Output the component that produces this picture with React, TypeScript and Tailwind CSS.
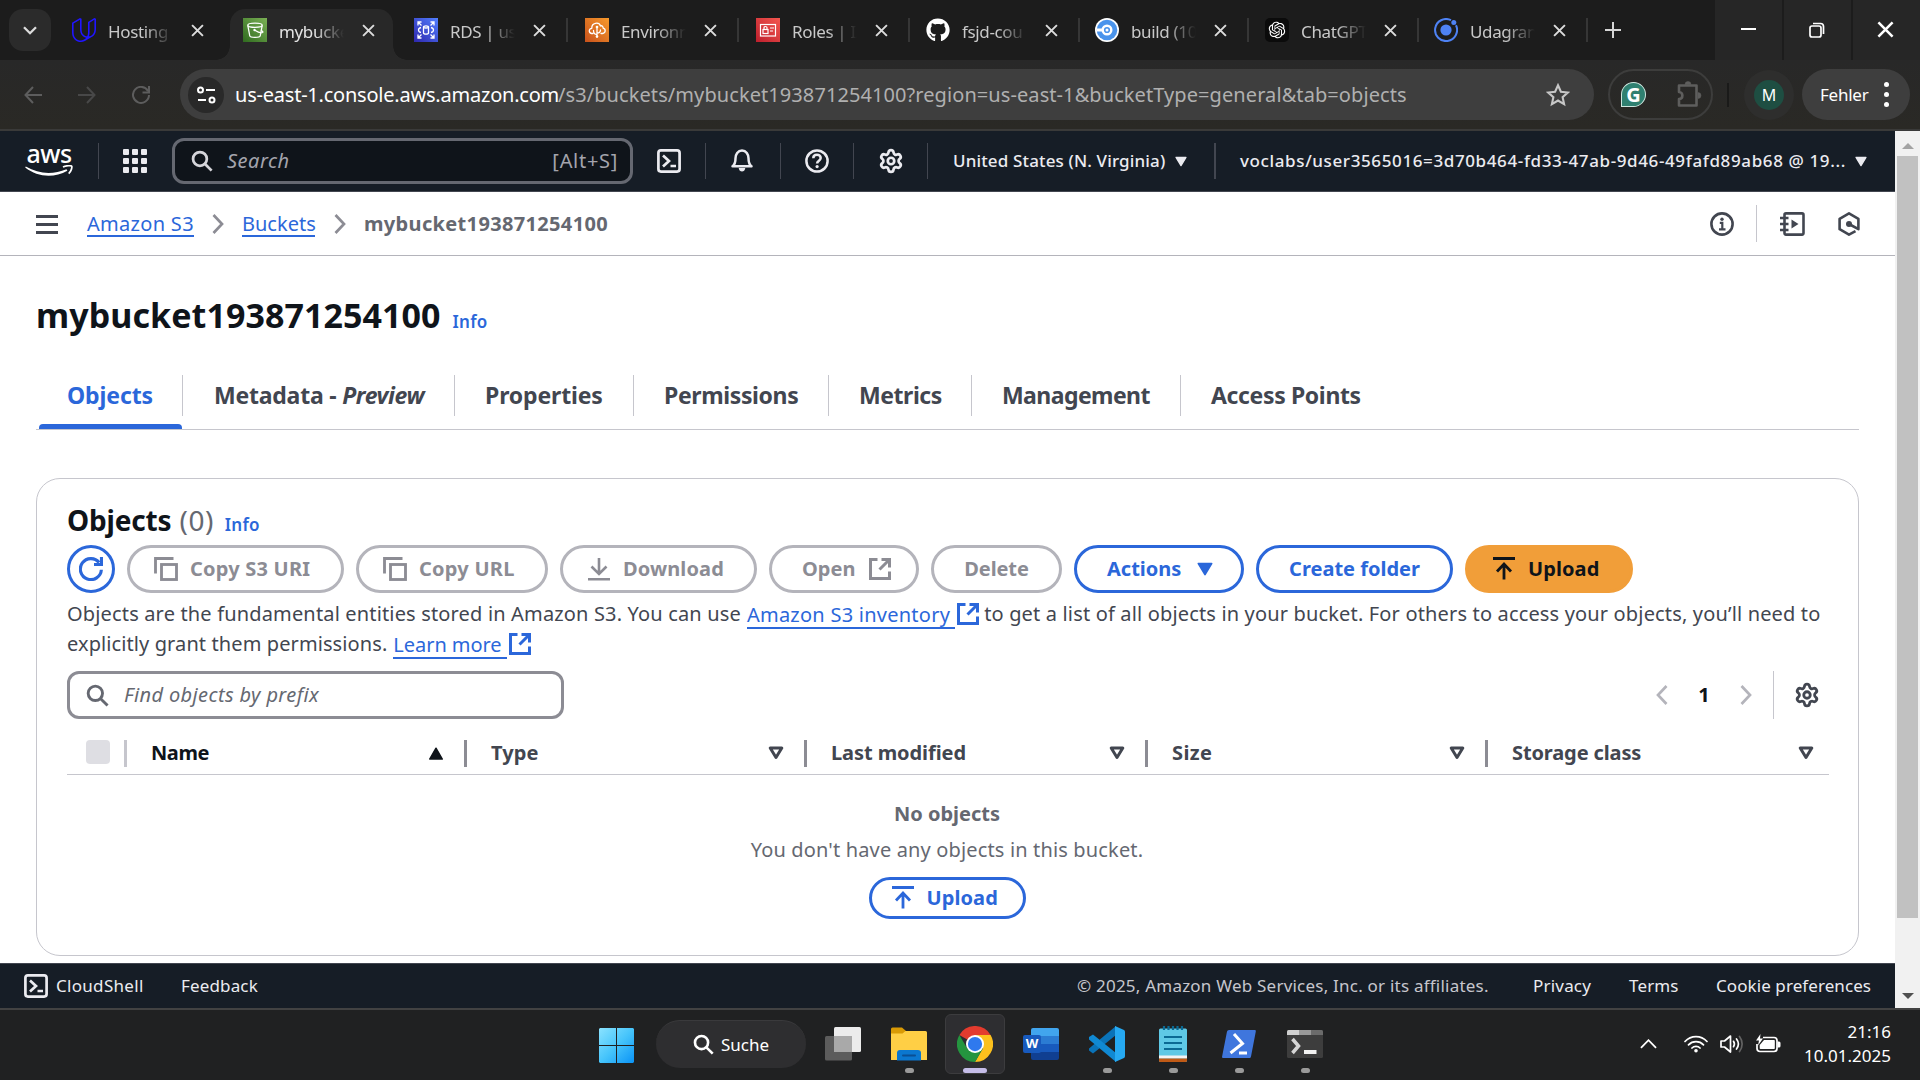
import type { ReactNode } from "react";
import { FaGithub } from "react-icons/fa";
import { RiOpenaiFill } from "react-icons/ri";
import { SiUdacity } from "react-icons/si";
import { Settings } from "lucide-react";

/* ---------- favicons ---------- */

function S3Favicon() {
  return (
    <svg viewBox="0 0 24 24" className="size-6">
      <defs>
        <linearGradient id="s3" x1="0" y1="1" x2="1" y2="0">
          <stop offset="0" stopColor="#2f6b1f" />
          <stop offset="1" stopColor="#7bb055" />
        </linearGradient>
      </defs>
      <rect width="24" height="24" fill="url(#s3)" />
      <g fill="none" stroke="#fff" strokeWidth="1.3">
        <ellipse cx="12" cy="7.3" rx="7.2" ry="2.1" />
        <path d="M4.8 7.3 6.8 18c.3 1.8 10.1 1.8 10.4 0L19.2 7.3M11.8 12.3c3 1.9 6.500 3 7.800 2.200.9-.8-.8-1.900-2-2.500" />
      </g>
      <circle cx="11.5" cy="12" r="1.2" fill="#fff" />
    </svg>
  );
}

function RdsFavicon() {
  return (
    <svg viewBox="0 0 24 24" className="size-6">
      <defs>
        <linearGradient id="rds" x1="0" y1="1" x2="1" y2="0">
          <stop offset="0" stopColor="#2e27ad" />
          <stop offset="1" stopColor="#527fff" />
        </linearGradient>
      </defs>
      <rect width="24" height="24" fill="url(#rds)" />
      <g fill="none" stroke="#fff" strokeWidth="1.3">
        <path d="M4 7.500V4h3.500M4 4l3.500 3.500M20 7.500V4h-3.500M20 4l-3.500 3.500M4 16.500V20h3.500M4 20l3.500-3.500M20 16.500V20h-3.500M20 20l-3.500-3.500" />
        <path d="M9.500 9v6c0 1.500 5 1.500 5 0V9c0-1.500-5-1.500-5 0c0 1.300 5 1.300 5 0M7 9.500c-2 .5-2.500 1.500-2.500 2.500s.5 2 2.500 2.500M17 9.500c2 .5 2.500 1.500 2.500 2.500s-.5 2-2.500 2.500" />
      </g>
    </svg>
  );
}

function BeanstalkFavicon() {
  return (
    <svg viewBox="0 0 24 24" className="size-6">
      <defs>
        <linearGradient id="eb" x1="0" y1="1" x2="1" y2="0">
          <stop offset="0" stopColor="#c8511b" />
          <stop offset="1" stopColor="#f79a2c" />
        </linearGradient>
      </defs>
      <rect width="24" height="24" fill="url(#eb)" />
      <g fill="none" stroke="#fff" strokeWidth="1.3" strokeLinecap="round" strokeLinejoin="round">
        <path d="M8 15.500H6.500C3.500 14.800 3.500 10.800 6.800 10.300 6.500 4.500 14 3.500 15.500 8c1.500-.8 2.800.5 2.600 2.200 3 .8 2.700 4.800-.6 5.300H16" />
        <path d="M12 9v10M12 16.500c-3 0-3.500-2-3.500-4M12 15c2.500 0 3.500-1 3.500-3" />
      </g>
      <circle cx="12" cy="9" r="1.3" fill="#fff" />
      <circle cx="12" cy="18.5" r="1.3" fill="#fff" />
    </svg>
  );
}

function IamFavicon() {
  return (
    <svg viewBox="0 0 24 24" className="size-6">
      <defs>
        <linearGradient id="iam" x1="0" y1="1" x2="1" y2="0">
          <stop offset="0" stopColor="#bd1f2d" />
          <stop offset="1" stopColor="#f4574f" />
        </linearGradient>
      </defs>
      <rect width="24" height="24" fill="url(#iam)" />
      <g fill="none" stroke="#fff" strokeWidth="1.2">
        <rect x="4.5" y="6.5" width="15" height="11.5" />
        <rect x="7" y="11.5" width="5" height="4" />
        <path d="M8 11.500V9.700c0-1.600 3-1.600 3 0v1.800M14 10h4M14 13h3" />
      </g>
    </svg>
  );
}

function CircleCiFavicon() {
  return (
    <svg viewBox="0 0 24 24" className="size-6">
      <circle cx="12" cy="12" r="12" fill="#fff" />
      <circle cx="12" cy="12" r="10.3" fill="#4a94ec" />
      <path d="M1.500 12H12" stroke="#fff" strokeWidth="3" />
      <circle cx="12" cy="12" r="4.3" fill="#4a94ec" stroke="#fff" strokeWidth="2.4" />
      <circle cx="12" cy="12" r="1.5" fill="#fff" />
    </svg>
  );
}

function IonicFavicon() {
  return (
    <svg viewBox="0 0 24 24" className="size-6">
      <path d="M22 7.300A11 11 0 1 1 17 2.200" fill="none" stroke="#4e82f4" strokeWidth="2" />
      <circle cx="12" cy="12" r="5.6" fill="#4e82f4" />
      <circle cx="19.8" cy="4.5" r="2.5" fill="#4e82f4" />
    </svg>
  );
}

/* ---------- small glyphs ---------- */

function Cross({ className }: { className: string }) {
  return (
    <svg viewBox="0 0 12 12" className={className} fill="none" stroke="currentColor" strokeWidth="1.8">
      <path d="M1 1l10 10M11 1L1 11" />
    </svg>
  );
}

function Magnifier({ className }: { className: string }) {
  return (
    <svg viewBox="0 0 16 16" className={className} fill="none" stroke="currentColor" strokeWidth="2">
      <circle cx="6.5" cy="6.5" r="5" />
      <path d="M10.200 10.200l4.800 4.800" />
    </svg>
  );
}

function CopyIcon() {
  return (
    <svg viewBox="0 0 16 16" className="size-6" fill="none" stroke="currentColor" strokeWidth="1.9">
      <path d="M1 11V1h12" />
      <rect x="5" y="5" width="10" height="10" />
    </svg>
  );
}

function ExternalIcon({ className }: { className: string }) {
  return (
    <svg viewBox="0 0 22 22" className={className} fill="none" stroke="currentColor" strokeWidth="3">
      <path d="M8.500 1.500h-7v19h19v-7" />
      <path d="M12.500 1.500h8v8M20.500 1.500L10.500 11.500" />
    </svg>
  );
}

function UploadIcon() {
  return (
    <svg viewBox="0 0 22 24" className="h-6 w-[22px]" fill="none" stroke="currentColor" strokeWidth="2.8">
      <path d="M0 1.500h22M11 22.500V8M4 14.500l7-7.500 7 7.500" />
    </svg>
  );
}

function DownloadIcon() {
  return (
    <svg viewBox="0 0 22 24" className="h-6 w-[22px]" fill="none" stroke="currentColor" strokeWidth="2.6">
      <path d="M0 22.300h22M11 1v15M3.500 9.500l7.500 7.500 7.500-7.500" />
    </svg>
  );
}

function ChevronRight({ className }: { className: string }) {
  return (
    <svg viewBox="0 0 12 20" className={className} fill="none" stroke="currentColor" strokeWidth="2.7">
      <path d="M1.500 1l8.500 9-8.500 9" />
    </svg>
  );
}

function CaretDown({ className }: { className: string }) {
  return (
    <svg viewBox="0 0 14 12" className={className} fill="currentColor" stroke="currentColor" strokeWidth="1.5" strokeLinejoin="round">
      <path d="M1.200 1.200h11.600L7 10.800z" />
    </svg>
  );
}

function SortIcon() {
  return (
    <svg viewBox="0 0 16 14" className="h-[14px] w-4" fill="none" stroke="currentColor" strokeWidth="3" strokeLinejoin="round">
      <path d="M2.200 2h11.600L8 11.500z" />
    </svg>
  );
}

function ShellIcon() {
  return (
    <svg viewBox="0 0 24 24" className="size-6" fill="none" stroke="currentColor" strokeWidth="2.7">
      <rect x="1.4" y="1.4" width="21.2" height="21.2" rx="2.5" />
      <path d="M6 6.500l6 5.500-6 5.500M13.500 17h5.500" />
    </svg>
  );
}

/* ---------- browser chrome ---------- */

type BrowserTab = { title: string; icon: ReactNode; active?: boolean; width: string; divider: boolean };

const browserTabs: BrowserTab[] = [
  { title: "Hosting", icon: <SiUdacity className="size-6 text-[#2015ff]" />, width: "w-[171px]", divider: false },
  { title: "mybucke", icon: <S3Favicon />, active: true, width: "w-[171px]", divider: false },
  { title: "RDS | us", icon: <RdsFavicon />, width: "w-[171px]", divider: true },
  { title: "Environn", icon: <BeanstalkFavicon />, width: "w-[171px]", divider: true },
  { title: "Roles | IA", icon: <IamFavicon />, width: "w-[170px]", divider: true },
  { title: "fsjd-cou", icon: <FaGithub className="size-6 text-white" />, width: "w-[169px]", divider: true },
  { title: "build (10", icon: <CircleCiFavicon />, width: "w-[170px]", divider: true },
  {
    title: "ChatGPT",
    icon: (
      <span className="flex size-6 items-center justify-center rounded-[5px] bg-[#0b0b0b]">
        <RiOpenaiFill className="size-5 text-white" />
      </span>
    ),
    width: "w-[169px]",
    divider: true,
  },
  { title: "Udagran", icon: <IonicFavicon />, width: "w-[169px]", divider: true },
];

function TabItem({ tab }: { tab: BrowserTab }) {
  const shell = tab.active
    ? "relative h-[51px] rounded-t-[15px] bg-[#282828] text-[#e3e3e3]"
    : "relative h-[51px] text-[#c9c9c9]";
  return (
    <div className={`${tab.width} shrink-0`}>
      <div className={`${shell} flex items-center pl-[13px] pb-[9px] ${tab.active ? "mr-2" : ""}`}>
        {tab.active && (
          <>
            <span className="absolute bottom-0 -left-[14px] size-[14px] bg-[radial-gradient(circle_at_top_left,transparent_13.500px,#282828_14px)]" />
            <span className="absolute -right-[14px] bottom-0 size-[14px] bg-[radial-gradient(circle_at_top_right,transparent_13.500px,#282828_14px)]" />
          </>
        )}
        <span className="flex size-6 shrink-0">{tab.icon}</span>
        <span className="ml-3 w-[65px] shrink-0 overflow-hidden pt-1 text-[17px] leading-6 tracking-[-0.35px] whitespace-nowrap [mask-image:linear-gradient(to_right,black_55%,transparent)]">
          {tab.title}
        </span>
        <Cross className="ml-[18px] size-[13px] shrink-0 text-[#dcdcdc]" />
        {tab.divider && <span className="ml-[20px] h-6 w-[2px] shrink-0 bg-[#363636]" />}
      </div>
    </div>
  );
}

function TabStrip() {
  return (
    <div className="flex h-[60px] bg-[#1c1c1c] pl-[9px]">
      <div className="mt-[9px] flex h-[42px] w-[42px] items-center justify-center rounded-[14px] bg-[#2b2b2b] text-[#dcdcdc]">
        <svg viewBox="0 0 14 9" className="h-[9px] w-[14px]" fill="none" stroke="currentColor" strokeWidth="2.3">
          <path d="M1 1.200l6 6 6-6" />
        </svg>
      </div>
      <div className="flex pt-[9px] pl-[8px]">
        {browserTabs.map((t) => (
          <TabItem key={t.title} tab={t} />
        ))}
      </div>
      <svg viewBox="0 0 16 16" className="mt-[22px] ml-[15px] size-4 text-[#d6d6d6]" fill="none" stroke="currentColor" strokeWidth="2">
        <path d="M8 0v16M0 8h16" />
      </svg>
      <div className="ml-auto flex gap-[2px] bg-[#1c1c1c] text-white">
        <div className="flex w-[67px] justify-center bg-[#262626] pt-[28px]">
          <span className="h-[2px] w-[15px] bg-white" />
        </div>
        <div className="flex w-[67px] items-center justify-center bg-[#262626] pr-[2px]">
          <svg viewBox="0 0 16 16" className="size-4" fill="none" stroke="currentColor" strokeWidth="1.7">
            <rect x="1" y="4" width="11" height="11" rx="2" />
            <path d="M4 1.500h7.500c2 0 3 1 3 3V12" />
          </svg>
        </div>
        <div className="flex w-[67px] items-center justify-center bg-[#262626] pr-[2px] pb-[2px]">
          <Cross className="size-[17px]" />
        </div>
      </div>
    </div>
  );
}

function Toolbar() {
  return (
    <div className="flex h-[71px] items-center border-b-2 border-[#3a3a39] bg-linear-to-b from-[#282828] to-[#2a2925] pl-6">
      <div className="flex w-[156px] shrink-0 items-center text-[#5d5d5d]">
        <svg viewBox="0 0 18 18" className="size-[18px]" fill="none" stroke="currentColor" strokeWidth="2">
          <path d="M18 9H1.500M9 1L1.500 9 9 17" />
        </svg>
        <svg viewBox="0 0 18 18" className="ml-9 size-[18px] text-[#484848]" fill="none" stroke="currentColor" strokeWidth="2">
          <path d="M0 9h16.500M9 1l7.500 8L9 17" />
        </svg>
        <svg viewBox="0 0 18 18" className="ml-[36px] size-[18px]" fill="none" stroke="currentColor" strokeWidth="2">
          <path d="M16 5A8 8 0 1 0 17 9M17 0v6.500h-6.500" />
        </svg>
      </div>
      <div className="flex h-[51px] w-[1414px] shrink-0 items-center rounded-full bg-[#3e3e3e] pl-2">
        <span className="flex size-9 items-center justify-center rounded-full bg-[#292929] text-white">
          <svg viewBox="0 0 19 18" className="h-[18px] w-[19px]" fill="none" stroke="currentColor" strokeWidth="2">
            <circle cx="3.5" cy="4" r="2.5" />
            <path d="M9 4h9M1 14h8" />
            <circle cx="15" cy="14" r="2.5" />
          </svg>
        </span>
        <span className="ml-[11px] w-[323px] text-[20px] tracking-[-0.22px] whitespace-nowrap text-white">us-east-1.console.aws.amazon.com</span>
        <span className="text-[20px] tracking-[0.08px] whitespace-nowrap text-[#b0b0b0]">
          /s3/buckets/mybucket193871254100?region=us-east-1&amp;bucketType=general&amp;tab=objects
        </span>
        <svg viewBox="0 0 24 24" className="mr-6 ml-auto size-6 text-[#c7c7c7]" fill="none" stroke="currentColor" strokeWidth="2.1">
          <path d="M12 2.300l2.900 6.500 7 .7-5.300 4.700 1.500 6.900-6.100-3.600-6.100 3.600 1.500-6.900L2.100 9.500l7-.7z" />
        </svg>
      </div>
      <div className="ml-[14px] flex h-[51px] w-[105px] shrink-0 items-center rounded-full border-2 border-[#3d3d3c] pl-[11px]">
        <span className="flex size-[25px] shrink-0 items-center justify-center rounded-full rounded-bl-[3px] border-[1.5px] border-[#cfe6df] bg-[#2f8070] text-[20px] leading-none font-bold text-white">
          G
        </span>
        <svg viewBox="0 0 25 27" className="-mt-[2px] ml-[31px] h-[27px] w-[25px] shrink-0 text-[#5e5e5d]" fill="none" stroke="currentColor" strokeWidth="2.6">
          <path d="M2 5.500h17.500v20H2V19c4.500 0 4.500-7 0-7z" strokeLinejoin="round" />
          <path d="M8 4.500a3 3 0 0 1 6 0zM21 12.500a3 3 0 0 1 0 6z" fill="currentColor" strokeWidth="0.5" />
        </svg>
      </div>
      <span className="ml-[14px] h-6 w-[2px] bg-[#1a1a19]" />
      <span className="ml-[15px] flex size-[50px] items-center justify-center rounded-full bg-[#2e2e2d]">
        <span className="flex size-[30px] items-center justify-center rounded-full bg-[#1e4e42] text-[16px] text-white">M</span>
      </span>
      <div className="ml-2 flex h-[51px] w-[108px] items-center rounded-full bg-[#3e3e3e] pl-[18px] text-white">
        <span className="w-[49px] text-[17px] tracking-[-0.25px]">Fehler</span>
        <span className="ml-[15px] flex flex-col gap-[5px]">
          <span className="size-[5px] rounded-full bg-white" />
          <span className="size-[5px] rounded-full bg-white" />
          <span className="size-[5px] rounded-full bg-white" />
        </span>
      </div>
    </div>
  );
}

/* ---------- console ---------- */

function HeaderRule({ className }: { className: string }) {
  return <span className={`${className} h-9 w-px shrink-0 bg-[#424650]`} />;
}

function AwsHeader() {
  return (
    <header className="flex h-[61px] shrink-0 items-center border-b border-[#424650] bg-[#161d26] pl-[25px] text-[#ebebf0]">
      <div className="flex w-[48px] flex-col items-center pt-[2px] text-white">
        <span className="h-[17px] text-[25px] leading-[11px] font-medium tracking-[-0.5px]">aws</span>
        <svg viewBox="0 0 48 12" className="h-3 w-12">
          <path d="M.8 1.600C14 9.300 28 9.700 41.500 4.300l.9 1.400C29 13.300 12.500 12.300.2 2.500z" fill="#fff" />
          <path d="M38 2c3-1.500 8-1.700 8.700-.8.500 1-.3 5-3 7.400" fill="none" stroke="#fff" strokeWidth="1.7" />
        </svg>
      </div>
      <HeaderRule className="ml-[25px]" />
      <div className="ml-6 grid grid-cols-3 gap-[3px]">
        {Array.from({ length: 9 }, (_, i) => (
          <span key={i} className="size-[6px] rounded-[1px] bg-[#ebebf0]" />
        ))}
      </div>
      <div className="ml-[25px] flex h-[46px] w-[461px] items-center rounded-[12px] border-3 border-[#656871] bg-[#0f141a] pr-[12px] pl-[16px]">
        <Magnifier className="size-[22px] text-[#d5d5da]" />
        <span className="ml-[14px] text-[20px] tracking-[0.5px] text-[#a4a4ad] italic">Search</span>
        <span className="ml-auto text-[20px] tracking-[0.7px] text-[#a4a4ad]">[Alt+S]</span>
      </div>
      <span className="ml-6"><ShellIcon /></span>
      <HeaderRule className="ml-6" />
      <svg viewBox="0 0 24 24" className="ml-[24px] size-6" fill="none" stroke="currentColor" strokeWidth="2.5">
        <path d="M2.500 17.300c2.500-1.800 3-4 3-8 0-4 2.300-7.800 6.500-7.800s6.500 3.800 6.500 7.800c0 4 .5 6.200 3 8z" strokeLinejoin="round" />
        <path d="M8.700 19c.5 4.700 6.100 4.700 6.600 0z" fill="currentColor" stroke="none" />
      </svg>
      <HeaderRule className="ml-[26px]" />
      <svg viewBox="0 0 24 24" className="ml-6 size-6" fill="none" stroke="currentColor" strokeWidth="2.5">
        <circle cx="12" cy="12" r="10.6" />
        <path d="M8.300 9.200c0-4.600 7.400-4.400 7.400-.2 0 2.600-3.600 2.700-3.600 5.400" />
        <circle cx="12.1" cy="17.6" r="1.6" fill="currentColor" stroke="none" />
      </svg>
      <HeaderRule className="ml-6" />
      <Settings className="ml-[24px] size-[26px]" strokeWidth={2.5} />
      <HeaderRule className="ml-[23px]" />
      <span className="ml-[25px] w-[214px] text-[17px] font-medium tracking-[0.14px] whitespace-nowrap">United States (N. Virginia)</span>
      <CaretDown className="ml-[8px] h-[11px] w-3" />
      <span className="ml-[27px] h-9 w-[2px] bg-[#424650]" />
      <span className="ml-6 w-[607px] text-[17px] font-medium tracking-[0.62px] whitespace-nowrap">
        voclabs/user3565016=3d70b464-fd33-47ab-9d46-49fafd89ab68 @ 19...
      </span>
      <CaretDown className="ml-[8px] h-[11px] w-3" />
    </header>
  );
}

function Breadcrumbs() {
  return (
    <div className="flex h-16 shrink-0 items-center border-b border-[#b4b4bb] pl-9 text-[20px] text-[#424650]">
      <div className="mt-px flex flex-col gap-[5px]">
        <span className="h-[3px] w-[22px] bg-[#424650]" />
        <span className="h-[3px] w-[22px] bg-[#424650]" />
        <span className="h-[3px] w-[22px] bg-[#424650]" />
      </div>
      <a className="ml-[29px] h-[27px] w-[107px] border-b-2 border-[#2b67da] leading-[28px] tracking-[0.3px] whitespace-nowrap text-[#2b67da]">Amazon S3</a>
      <ChevronRight className="ml-[18px] h-5 w-3 text-[#8c8c94]" />
      <a className="ml-[18px] h-[27px] w-[73px] border-b-2 border-[#2b67da] leading-[28px] whitespace-nowrap text-[#2b67da]">Buckets</a>
      <ChevronRight className="ml-[19px] h-5 w-3 text-[#8c8c94]" />
      <span className="ml-[18px] font-bold tracking-[0.34px] text-[#656871]">mybucket193871254100</span>
      <div className="ml-auto flex items-center pr-[34px]">
        <svg viewBox="0 0 24 24" className="size-6" fill="none" stroke="currentColor" strokeWidth="2.6">
          <circle cx="12" cy="12" r="10.6" />
          <path d="M9.800 10.800h2.500V17M9 17.300h6.500" strokeWidth="2.2" />
          <circle cx="12" cy="7.2" r="1.7" fill="currentColor" stroke="none" />
        </svg>
        <span className="ml-[22px] h-[37px] w-px bg-[#c6c6cd]" />
        <svg viewBox="0 0 25 24" className="ml-[23px] h-6 w-[25px]" fill="none" stroke="currentColor" strokeWidth="2.6">
          <rect x="4.5" y="1.4" width="19" height="21.2" rx="1.5" />
          <path d="M0 6h8.500M0 12h8.500M0 18h8.500" />
          <path d="M11.500 7.500l7 4.500-7 4.500z" fill="currentColor" stroke="none" />
        </svg>
        <svg viewBox="0 0 24 24" className="ml-[32px] size-6" fill="none" stroke="currentColor" strokeWidth="2.6">
          <path d="M18.500 19.200L12 22.600 2.600 17.200V6.800L12 1.400l9.400 5.400v10.400L12 12" strokeLinejoin="round" />
          <circle cx="12" cy="12" r="3" fill="currentColor" stroke="none" />
        </svg>
      </div>
    </div>
  );
}

const sectionTabs: { label: ReactNode; id: string; width: string; pad: string; tracking: string; active?: boolean }[] = [
  { id: "objects", label: "Objects", width: "w-[147px]", pad: "pl-[31px]", tracking: "tracking-[-0.1px]", active: true },
  {
    id: "metadata",
    label: (
      <>
        Metadata - <em className="tracking-[-0.4px]">Preview</em>
      </>
    ),
    width: "w-[272px]",
    pad: "pl-[31px]",
    tracking: "tracking-[-0.22px]",
  },
  { id: "properties", label: "Properties", width: "w-[179px]", pad: "pl-[30px]", tracking: "tracking-[-0.15px]" },
  { id: "permissions", label: "Permissions", width: "w-[195px]", pad: "pl-[30px]", tracking: "tracking-[-0.37px]" },
  { id: "metrics", label: "Metrics", width: "w-[143px]", pad: "pl-[30px]", tracking: "tracking-[-0.45px]" },
  { id: "management", label: "Management", width: "w-[209px]", pad: "pl-[30px]", tracking: "tracking-[-0.57px]" },
  { id: "access", label: "Access Points", width: "w-[200px]", pad: "pl-[30px]", tracking: "tracking-[-0.36px]" },
];

function SectionTabs() {
  return (
    <nav className="mt-[37px] flex border-b border-[#c6c6cd] text-[23px] font-bold text-[#424650]">
      {sectionTabs.map((t, i) => (
        <div key={t.id} className={t.width}>
          <div
            className={`flex h-[41px] items-center leading-[41px] whitespace-pre ${t.pad} ${t.tracking} ${
              i < sectionTabs.length - 1 ? "border-r border-[#c6c6cd]" : ""
            } ${t.active ? "text-[#2b67da]" : ""}`}
          >
            <span>{t.label}</span>
          </div>
          {t.active && <div className="mt-2 ml-[3px] h-[5px] w-[143px] rounded-t-[4px] bg-[#2b67da]" />}
        </div>
      ))}
    </nav>
  );
}

const pillBase = "flex h-12 shrink-0 items-center rounded-full border-3 text-[20px] font-bold whitespace-nowrap";
const pillOff = "border-[#b4b4bb] text-[#8c8c94]";
const pillOn = "border-[#2b67da] text-[#2b67da]";

function ActionBar() {
  return (
    <div className="mt-[5px] flex gap-3">
      <button className={`${pillBase} ${pillOn} w-12 justify-center`}>
        <svg viewBox="0 0 16 16" className="size-6 shrink-0" fill="none" stroke="currentColor" strokeWidth="2.1">
          <path d="M14.900 8.500A7 7 0 1 1 13.400 3.700" />
          <path d="M15 0v5h-5" />
        </svg>
      </button>
      <button className={`${pillBase} ${pillOff} w-[217px] pl-6`}>
        <CopyIcon />
        <span className="ml-[12px] tracking-[0.22px]">Copy S3 URI</span>
      </button>
      <button className={`${pillBase} ${pillOff} w-[192px] pl-6`}>
        <CopyIcon />
        <span className="ml-[12px] tracking-[0.25px]">Copy URL</span>
      </button>
      <button className={`${pillBase} ${pillOff} w-[197px] pl-[25px]`}>
        <DownloadIcon />
        <span className="ml-[13px] tracking-[0.12px]">Download</span>
      </button>
      <button className={`${pillBase} ${pillOff} w-[150px] pl-[30px]`}>
        <span>Open</span>
        <ExternalIcon className="ml-[14px] size-[22px]" />
      </button>
      <button className={`${pillBase} ${pillOff} w-[131px] justify-center tracking-[-0.1px]`}>Delete</button>
      <button className={`${pillBase} ${pillOn} w-[170px] pl-[30px]`}>
        <span>Actions</span>
        <CaretDown className="ml-[16px] h-[14px] w-4" />
      </button>
      <button className={`${pillBase} ${pillOn} w-[197px] justify-center`}>Create folder</button>
      <button className={`${pillBase} w-[168px] border-[#f19e39] bg-[#f19e39] pl-[25px] text-[#0f141a]`}>
        <UploadIcon />
        <span className="ml-[13px] tracking-[0.1px]">Upload</span>
      </button>
    </div>
  );
}

function DocLink({ children, tracking }: { children: ReactNode; tracking: string }) {
  return (
    <a className="mr-[5px] ml-[6px] flex items-center text-[#2b67da]">
      <span className={`mt-px h-[28px] border-b-2 border-[#2b67da] pr-[5px] leading-[27px] whitespace-nowrap ${tracking}`}>{children}</span>
      <ExternalIcon className="ml-[2px] size-[22px]" />
    </a>
  );
}

const columns = [
  { name: "Type", width: "w-[340px]", tracking: "tracking-[0.1px]", end: "pr-5" },
  { name: "Last modified", width: "w-[341px]", tracking: "tracking-[-0.08px]", end: "pr-5" },
  { name: "Size", width: "w-[340px]", tracking: "tracking-[0.4px]", end: "pr-5" },
  { name: "Storage class", width: "w-[344px]", tracking: "tracking-[-0.12px]", end: "pr-[15px]" },
];

function ObjectsTable() {
  return (
    <>
      <div className="mt-[21px] flex h-[35px] shrink-0 border-b border-[#c6c6cd] text-[20px] font-bold text-[#424650]">
        <div className="flex h-[27px] w-[57px] pl-[19px]">
          <span className="size-6 rounded-[4px] bg-[#dedee3]" />
        </div>
        <div className="flex h-[27px] w-[340px] items-center border-l-3 border-[#c6c6cd] pl-[24px] text-[#0f141a]">
          <span className="pb-[2px] leading-6 tracking-[-0.4px]">Name</span>
          <svg viewBox="0 0 16 14" className="mr-[20px] ml-auto h-[13px] w-4" fill="currentColor" stroke="currentColor" strokeWidth="1.5" strokeLinejoin="round">
            <path d="M1.200 13L8 1.200 14.800 13z" />
          </svg>
        </div>
        {columns.map((c) => (
          <div key={c.name} className={`${c.width} ${c.end} flex h-[27px] items-center border-l-3 border-[#8c8c94] pl-6`}>
            <span className={`pb-[2px] leading-6 ${c.tracking}`}>{c.name}</span>
            <span className="mb-px ml-auto">
              <SortIcon />
            </span>
          </div>
        ))}
      </div>
      <div className="flex flex-col items-center pr-[2px] text-[20px] leading-[30px] text-[#656871]">
        <p className="mt-6 font-bold">No objects</p>
        <p className="mt-[6px] tracking-[0.15px]">You don't have any objects in this bucket.</p>
        <button className="mt-[12px] flex h-[42px] w-[157px] items-center rounded-full border-3 border-[#2b67da] pl-5 font-bold text-[#2b67da]">
          <UploadIcon />
          <span className="ml-[13px] tracking-[0.1px]">Upload</span>
        </button>
      </div>
    </>
  );
}

function ObjectsCard() {
  return (
    <section className="mt-12 flex h-[478px] flex-col rounded-[24px] border border-[#c6c6cd] pt-[21px] pr-[29px] pl-[30px]">
      <h2 className="flex h-10 items-baseline leading-10">
        <span className="text-[28px] font-bold tracking-[-0.15px] text-[#0f141a]">Objects</span>
        <span className="ml-[8px] text-[28px] tracking-[0.5px] text-[#656871]">(0)</span>
        <span className="ml-[11px] text-[17px] font-semibold tracking-[0.2px] text-[#2b67da]">Info</span>
      </h2>
      <ActionBar />
      <div className="mt-[6px] text-[20px] text-[#424650]">
        <div className="flex h-[30px] items-center whitespace-nowrap">
          <span className="tracking-[0.16px]">Objects are the fundamental entities stored in Amazon S3. You can use</span>
          <DocLink tracking="tracking-[0.25px]">Amazon S3 inventory</DocLink>
          <span className="tracking-[0.16px]">to get a list of all objects in your bucket. For others to access your objects, you’ll need to</span>
        </div>
        <div className="flex h-[30px] items-center whitespace-nowrap">
          <span className="tracking-[0.1px]">explicitly grant them permissions.</span>
          <DocLink tracking="tracking-[-0.05px]">Learn more</DocLink>
        </div>
      </div>
      <div className="mt-3 flex items-center justify-between">
        <div className="flex h-12 w-[497px] items-center rounded-[12px] border-3 border-[#8c8c94] pl-[16px]">
          <Magnifier className="size-[23px] text-[#656871]" />
          <span className="ml-[15px] text-[20px] tracking-[0.38px] text-[#656871] italic">Find objects by prefix</span>
        </div>
        <div className="flex items-center pr-[9px] text-[#b4b4bb]">
          <ChevronRight className="h-5 w-3 rotate-180" />
          <span className="w-[72px] text-center text-[20px] font-bold text-[#0f141a]">1</span>
          <ChevronRight className="h-5 w-3" />
          <span className="ml-[21px] h-12 w-px bg-[#c6c6cd]" />
          <Settings className="ml-5 size-[26px] text-[#424650]" strokeWidth={2.6} />
        </div>
      </div>
      <ObjectsTable />
    </section>
  );
}

function ConsoleFooter() {
  return (
    <footer className="flex h-[45px] shrink-0 items-center border-t border-[#424650] bg-[#161d26] pl-6 text-[17px] whitespace-nowrap text-[#ebebf0]">
      <ShellIcon />
      <span className="ml-[8px] w-[125px] tracking-[0.3px]">CloudShell</span>
      <span className="tracking-[0.15px]">Feedback</span>
      <span className="ml-auto w-[456px] tracking-[0.22px] text-[#c6c6cd]">© 2025, Amazon Web Services, Inc. or its affiliates.</span>
      <span className="w-[96px] tracking-[0.2px]">Privacy</span>
      <span className="w-[87px] tracking-[0.15px]">Terms</span>
      <span className="w-[179px] tracking-[0.08px]">Cookie preferences</span>
    </footer>
  );
}

function Scrollbar() {
  return (
    <div className="flex w-[25px] shrink-0 flex-col items-center justify-between bg-[#f1f1f1]">
      <div className="flex w-full flex-col items-center">
        <div className="flex h-[25px] items-center">
          <span className="mt-1 border-x-[6px] border-b-[6px] border-x-transparent border-b-[#a3a3a3]" />
        </div>
        <div className="h-[762px] w-[21px] bg-[#c1c1c1]" />
      </div>
      <span className="mb-[9px] border-x-[6px] border-t-[6px] border-x-transparent border-t-[#505050]" />
    </div>
  );
}

/* ---------- taskbar ---------- */

function WindowsLogo() {
  return (
    <svg viewBox="0 0 35 35" className="size-[35px]">
      <defs>
        <linearGradient id="win" x1="0" y1="0" x2="1" y2="1" gradientUnits="objectBoundingBox">
          <stop offset="0" stopColor="#8be3ff" />
          <stop offset="0.5" stopColor="#47c5fb" />
          <stop offset="1" stopColor="#0a93f6" />
        </linearGradient>
      </defs>
      <path d="M1 0h16v17H0V1zM18 0h16l1 1v16H18zM0 18h17v17H1l-1-1zM18 18h17v16l-1 1H18z" fill="url(#win)" />
    </svg>
  );
}

function TaskViewIcon() {
  return (
    <svg viewBox="0 0 36 34" className="h-[34px] w-9">
      <rect x="9" width="27" height="25" rx="1.5" fill="#ececec" />
      <rect y="9" width="27" height="24.5" rx="1.5" fill="#5c5c5c" />
      <rect x="9" y="9" width="18" height="16" fill="#a9a9a9" />
    </svg>
  );
}

function ExplorerIcon() {
  return (
    <svg viewBox="0 0 36 34" className="h-[34px] w-9">
      <path d="M0 2q0-1.500 1.500-1.500H11L15 4v6H0z" fill="#d99a05" />
      <path d="M0 6.500h11.500L14.500 4H34.500Q36 4 36 5.500V33H0z" fill="#ffcf45" />
      <path d="M6 33.500V26q0-3 3-3h18q3 0 3 3v7.500z" fill="#0b77cf" />
      <rect x="11" y="27.5" width="14" height="2" rx="1" fill="#0a4f93" />
    </svg>
  );
}

function ChromeIcon() {
  return (
    <svg viewBox="0 0 48 48" className="size-9">
      <path d="M24 24L3.200 12A24 24 0 0 1 44.800 12z" fill="#e33b2e" />
      <path d="M24 12H44.800A24 24 0 0 1 24 48L34.400 30z" fill="#fcc01d" />
      <path d="M34.400 30L24 48A24 24 0 0 1 3.200 12L13.600 30z" fill="#24953f" />
      <circle cx="24" cy="24" r="12" fill="#fff" />
      <circle cx="24" cy="24" r="9.5" fill="#2f79ee" />
    </svg>
  );
}

function WordIcon() {
  return (
    <div className="relative h-8 w-9">
      <div className="ml-2 flex h-8 w-7 flex-col overflow-hidden rounded-[2px]">
        <span className="h-2 bg-[#41a5ee]" />
        <span className="h-2 bg-[#2b7cd3]" />
        <span className="h-2 bg-[#185abd]" />
        <span className="h-2 bg-[#103f91]" />
      </div>
      <span className="absolute top-[7px] left-0 flex h-[18px] w-[18px] items-center justify-center rounded-[2px] bg-[#185abd] text-[13px] font-bold text-white">
        W
      </span>
    </div>
  );
}

function VsCodeIcon() {
  return (
    <svg viewBox="0 0 36 36" className="size-9">
      <path d="M27 0v9L4 27.500 0 24.500v-2z" fill="#0a73b8" />
      <path d="M27 36v-9L4 8.500 0 11v2.500z" fill="#1089d3" />
      <path d="M26 0l9 4q1 .5 1 2v24q0 1.500-1 2l-9 4z" fill="#26a9f2" />
    </svg>
  );
}

function NotepadIcon() {
  return (
    <svg viewBox="0 0 28 36" className="h-9 w-7">
      <rect y="2.5" width="28" height="33.5" rx="1.5" fill="#5fc9e6" />
      <rect y="29.5" width="28" height="3" fill="#f3f3f3" />
      <path d="M0 32.500h28V35q0 1-1.500 1h-25Q0 36 0 35z" fill="#c05a16" />
      <path d="M5 0v4M9.500 0v4M14 0v4M18.500 0v4M23 0v4" stroke="#0b6a94" strokeWidth="2.2" />
      <path d="M5 11h18M5 17h18M5 23h18" stroke="#0b6a94" strokeWidth="2" />
    </svg>
  );
}

function PowerShellIcon() {
  return (
    <svg viewBox="0 0 34 28" className="h-7 w-[34px]">
      <path d="M7 0h26q1 0 .8 1.500L29 26.500q-.3 1.500-1.500 1.500H1q-1.200 0-.9-1.500L5 1.500Q5.300 0 7 0z" fill="#3f76dd" />
      <path d="M12 4l8.500 9.500L8.500 23M17 23h8" fill="none" stroke="#fff" strokeWidth="3" />
    </svg>
  );
}

function TerminalIcon() {
  return (
    <svg viewBox="0 0 36 28" className="h-7 w-9">
      <rect width="36" height="28" rx="1.5" fill="#3d3d3d" />
      <path d="M0 5V1.500Q0 0 1.500 0H12v5z" fill="#cfcfcf" />
      <path d="M12 0h12v5H12z" fill="#999" />
      <path d="M24 0h10.500Q36 0 36 1.500V5H24z" fill="#6b6b6b" />
      <path d="M5.500 9l6 7-6 7" fill="none" stroke="#d6d6d6" strokeWidth="3.5" />
      <rect x="17" y="20" width="12.5" height="4" fill="#f2f2f2" />
    </svg>
  );
}

const apps: { id: string; icon: ReactNode; state: "none" | "open" | "focused" }[] = [
  { id: "taskview", icon: <TaskViewIcon />, state: "none" },
  { id: "explorer", icon: <ExplorerIcon />, state: "open" },
  { id: "chrome", icon: <ChromeIcon />, state: "focused" },
  { id: "word", icon: <WordIcon />, state: "none" },
  { id: "vscode", icon: <VsCodeIcon />, state: "open" },
  { id: "notepad", icon: <NotepadIcon />, state: "open" },
  { id: "powershell", icon: <PowerShellIcon />, state: "open" },
  { id: "terminal", icon: <TerminalIcon />, state: "open" },
];

function Taskbar() {
  return (
    <div className="flex h-[72px] items-center border-t-2 border-[#424242] bg-[#202122] pb-[2px] text-white">
      <div className="ml-[599px] pt-[2px]">
        <WindowsLogo />
      </div>
      <div className="ml-[22px] flex h-12 w-[150px] items-center rounded-full border-t border-[#3a3a3c] bg-[#2e2e30] pl-[37px]">
        <Magnifier className="size-[21px]" />
        <span className="ml-[7px] text-[17px]">Suche</span>
      </div>
      <div className="ml-[7px] flex gap-[6px]">
        {apps.map((a) => (
          <div
            key={a.id}
            className={`relative flex h-[60px] w-[60px] items-center justify-center rounded-[6px] border ${
              a.state === "focused" ? "border-[#3c3c3e] bg-[#2e2e31]" : "border-transparent"
            }`}
          >
            {a.icon}
            {a.state === "open" && <span className="absolute bottom-0 h-[5px] w-[9px] rounded-full bg-[#9a9a9a]" />}
            {a.state === "focused" && <span className="absolute bottom-0 h-[5px] w-6 rounded-full bg-[#c5bde8]" />}
          </div>
        ))}
      </div>
      <div className="ml-auto flex items-center pr-[29px]">
        <svg viewBox="0 0 18 10" className="h-[10px] w-[17px]" fill="none" stroke="currentColor" strokeWidth="1.9">
          <path d="M1 9l8-8 8 8" />
        </svg>
        <svg viewBox="0 0 24 18" className="ml-[27px] h-[18px] w-6" fill="none" stroke="currentColor" strokeWidth="1.7" strokeLinecap="round">
          <path d="M1 6.500C7 0 17 0 23 6.500M4.500 9.800c4-4.300 11-4.300 15 0M8 13c2-2.200 6-2.200 8 0" />
          <circle cx="12" cy="15.7" r="1.8" fill="currentColor" stroke="none" />
        </svg>
        <svg viewBox="0 0 24 20" className="ml-[12px] h-5 w-6" fill="none" stroke="currentColor" strokeWidth="1.7" strokeLinecap="round">
          <path d="M1 7v6h3.500l6 5V2l-6 5z" strokeLinejoin="round" />
          <path d="M13.500 7.300c1 1.500 1 3.900 0 5.400M16.500 5c2.300 3 2.300 7 0 10" />
          <path d="M19.500 2.500c3.500 4.500 3.500 10.500 0 15" stroke="#636363" />
        </svg>
        <svg viewBox="0 0 26 20" className="ml-[11px] h-5 w-[26px]" fill="none" stroke="currentColor" strokeWidth="1.7">
          <path d="M8 3.500h11q3 0 3 3v8q0 3-3 3H5q-3 0-3-3V10" />
          <path d="M22.500 7.500h1.500q1.500 0 1.500 1.500v3q0 1.500-1.500 1.500h-1.500z" fill="currentColor" stroke="none" />
          <path d="M9 6h10q.8 0 .8.800v7.400q0 .8-.8.800H5.500q-.8 0-.8-.8V11z" fill="currentColor" stroke="none" />
          <path d="M5.500 0L1 6.500h3L3 11.500 8 4.500H5z" fill="currentColor" stroke="none" />
        </svg>
        <div className="ml-[22px] w-[88px] text-right text-[17px] leading-6 whitespace-nowrap">
          <div>21:16</div>
          <div>10.01.2025</div>
        </div>
      </div>
    </div>
  );
}

export default function App() {
  return (
    <div className="flex h-[1080px] w-[1920px] flex-col overflow-hidden bg-white font-['Noto_Sans','Open_Sans',sans-serif]">
      <TabStrip />
      <Toolbar />
      <div className="flex h-[877px]">
        <div className="flex w-[1895px] flex-col">
          <AwsHeader />
          <Breadcrumbs />
          <main className="flex-1 overflow-hidden bg-white px-9 pt-9">
            <h1 className="flex h-[46px] items-baseline leading-[46px]">
              <span className="text-[34px] font-bold tracking-[0.07px] text-[#0f141a]">mybucket193871254100</span>
              <span className="ml-3 text-[17px] font-semibold tracking-[0.2px] text-[#2b67da]">Info</span>
            </h1>
            <SectionTabs />
            <ObjectsCard />
          </main>
          <ConsoleFooter />
        </div>
        <Scrollbar />
      </div>
      <Taskbar />
    </div>
  );
}
